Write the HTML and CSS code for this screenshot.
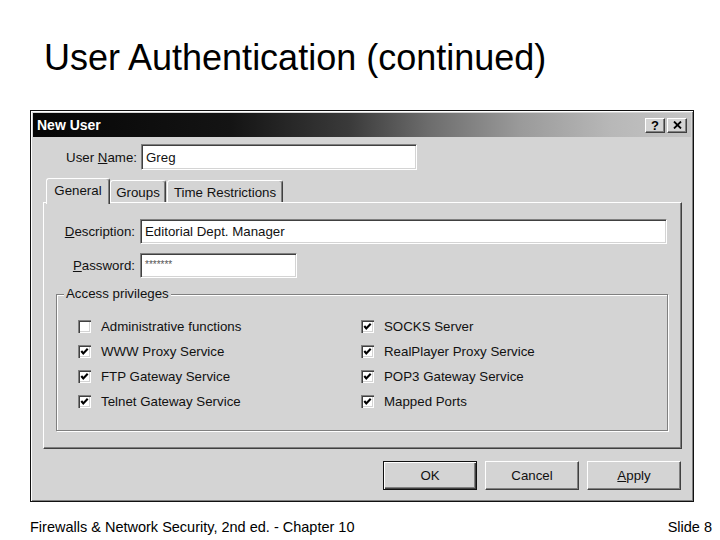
FILE: index.html
```html
<!DOCTYPE html>
<html>
<head>
<meta charset="utf-8">
<link rel="stylesheet" href="styles.css">
</head>
<body>
<div class="slide">
  <h1 class="title">User Authentication (continued)</h1>
  <div class="dialog">
    <div class="titlebar">
      <span class="caption">New User</span>
      <span class="tb-btns">
        <span class="tb-btn">?</span>
        <span class="tb-btn"><svg width="9" height="8" viewBox="0 0 9 8"><path d="M1 0.5 L8 7.5 M8 0.5 L1 7.5" stroke="#000" stroke-width="1.8" fill="none"/></svg></span>
      </span>
    </div>
    <div class="row user-row">
      <span class="lbl lbl-user">User <u>N</u>ame:</span>
      <span class="field field-user">Greg</span>
    </div>
    <div class="tabs">
      <span class="tab active">General</span>
      <span class="tab tab-groups">Groups</span>
      <span class="tab tab-time">Time Restrictions</span>
    </div>
    <div class="panel">
      <div class="row prow">
        <span class="lbl lbl-panel"><u>D</u>escription:</span>
        <span class="field field-desc">Editorial Dept. Manager</span>
      </div>
      <div class="row prow pw-row">
        <span class="lbl lbl-panel"><u>P</u>assword:</span>
        <span class="field field-pw">*******</span>
      </div>
      <div class="group">
        <div class="legend">Access privileges</div>
        <div class="checks">
          <div class="check"><span class="box"></span><span>Administrative functions</span></div>
          <div class="check"><span class="box"><svg width="13" height="13" viewBox="0 0 13 13"><path d="M3.3 6 L5.3 8.4 L9.7 3.8" stroke="#000" stroke-width="2.1" fill="none"/></svg></span><span>SOCKS Server</span></div>
          <div class="check"><span class="box"><svg width="13" height="13" viewBox="0 0 13 13"><path d="M3.3 6 L5.3 8.4 L9.7 3.8" stroke="#000" stroke-width="2.1" fill="none"/></svg></span><span>WWW Proxy Service</span></div>
          <div class="check"><span class="box"><svg width="13" height="13" viewBox="0 0 13 13"><path d="M3.3 6 L5.3 8.4 L9.7 3.8" stroke="#000" stroke-width="2.1" fill="none"/></svg></span><span>RealPlayer Proxy Service</span></div>
          <div class="check"><span class="box"><svg width="13" height="13" viewBox="0 0 13 13"><path d="M3.3 6 L5.3 8.4 L9.7 3.8" stroke="#000" stroke-width="2.1" fill="none"/></svg></span><span>FTP Gateway Service</span></div>
          <div class="check"><span class="box"><svg width="13" height="13" viewBox="0 0 13 13"><path d="M3.3 6 L5.3 8.4 L9.7 3.8" stroke="#000" stroke-width="2.1" fill="none"/></svg></span><span>POP3 Gateway Service</span></div>
          <div class="check"><span class="box"><svg width="13" height="13" viewBox="0 0 13 13"><path d="M3.3 6 L5.3 8.4 L9.7 3.8" stroke="#000" stroke-width="2.1" fill="none"/></svg></span><span>Telnet Gateway Service</span></div>
          <div class="check"><span class="box"><svg width="13" height="13" viewBox="0 0 13 13"><path d="M3.3 6 L5.3 8.4 L9.7 3.8" stroke="#000" stroke-width="2.1" fill="none"/></svg></span><span>Mapped Ports</span></div>
        </div>
      </div>
    </div>
    <div class="buttons">
      <span class="btn default">OK</span>
      <span class="btn">Cancel</span>
      <span class="btn"><span><u>A</u>pply</span></span>
    </div>
  </div>
  <div class="footer">
    <span>Firewalls &amp; Network Security, 2nd ed. - Chapter 10</span>
    <span>Slide 8</span>
  </div>
</div>
</body>
</html>
```
FILE: styles.css
```css
* { box-sizing: border-box; }
body {
  margin: 0;
  background: #fff;
  font-family: "Liberation Sans", Arial, sans-serif;
}
.slide {
  width: 720px;
  height: 540px;
  display: flex;
  flex-direction: column;
  overflow: hidden;
}
.title {
  margin: 0;
  padding: 38px 0 0 44px;
  font-size: 36px;
  line-height: 40px;
  font-weight: normal;
  color: #000;
}
.dialog {
  margin: 32px 0 0 30px;
  width: 664px;
  height: 392px;
  flex: none;
  border: 1px solid #111;
  padding: 2px;
  background: #d4d4d4;
  box-shadow: inset 1px 1px #fff, inset -1px -1px #808080;
  display: flex;
  flex-direction: column;
  font-size: 13.3px;
  color: #111;
}
.titlebar {
  height: 24px;
  flex: none;
  background: linear-gradient(to right, #050505 0%, #141414 30%, #3a3a3a 48%, #6c6c6c 60%, #9a9a9a 74%, #b8b8b8 88%, #c4c4c4 100%);
  display: flex;
  align-items: center;
  justify-content: space-between;
  padding: 0 4px 0 4px;
}
.caption {
  color: #fff;
  font-weight: bold;
  font-size: 14px;
}
.tb-btns { display: flex; gap: 2px; }
.tb-btn {
  width: 20px;
  height: 15px;
  background: #d4d4d4;
  border: 1px solid;
  border-color: #fff #404040 #404040 #fff;
  box-shadow: inset -1px -1px #808080;
  display: flex;
  align-items: center;
  justify-content: center;
  font-weight: bold;
  font-size: 13px;
  color: #000;
  line-height: 1;
}
.row {
  display: flex;
  align-items: center;
  gap: 4px;
  flex: none;
}
.user-row { margin-top: 7px; height: 26px; }
.lbl { text-align: right; }
.lbl-user { width: 104px; }
.field {
  background: #fff;
  height: 26px;
  display: flex;
  align-items: center;
  padding-left: 4px;
  border: 1px solid;
  border-color: #808080 #fff #fff #808080;
  box-shadow: inset 1px 1px #404040, inset -1px -1px #d4d4d4;
}
.field-user { width: 276px; }
.tabs {
  margin: 8px 0 0 13px;
  height: 24px;
  flex: none;
  display: flex;
  align-items: flex-end;
}
.tab {
  height: 22px;
  display: flex;
  align-items: center;
  justify-content: center;
  border: 1px solid;
  border-bottom: none;
  border-color: #fff #404040 transparent #fff;
  box-shadow: inset -1px 0 #808080;
  border-radius: 3px 3px 0 0;
  background: #d4d4d4;
  padding-top: 1px;
}
.tab.active {
  width: 64px;
  height: 26px;
  margin-bottom: -2px;
  padding-bottom: 3px;
  position: relative;
  z-index: 1;
}
.tab-groups { width: 56px; }
.tab-time { width: 116px; margin-left: 1px; }
.panel {
  margin: 0 9px 0 10px;
  height: 247px;
  flex: none;
  border: 1px solid;
  border-color: #fff #404040 #404040 #fff;
  box-shadow: inset -1px -1px #808080;
  padding-top: 16px;
}
.prow { gap: 5px; height: 25px; }
.lbl-panel { width: 91px; }
.field-desc { width: 527px; height: 25px; }
.field-pw {
  width: 157px;
  height: 25px;
  font-size: 10px;
  color: #555;
  align-items: flex-start;
  padding-top: 5px;
}
.pw-row { margin-top: 9px; }
.group {
  margin: 16px 0 0 12px;
  width: 612px;
  height: 137px;
  border: 1px solid #808080;
  box-shadow: inset 1px 1px #fff, 1px 1px #fff;
}
.legend {
  width: fit-content;
  margin: -9px 0 0 7px;
  padding: 0 2px;
  height: 16px;
  line-height: 16px;
  background: #d4d4d4;
}
.checks {
  display: grid;
  grid-template-columns: 283px 1fr;
  grid-auto-rows: 25px;
  margin: 12px 0 0 21px;
}
.check {
  display: flex;
  align-items: center;
  gap: 10px;
}
.box {
  width: 13px;
  height: 13px;
  flex: none;
  background: #fff;
  box-shadow: inset 1px 1px #808080, inset 2px 2px #404040, inset -1px -1px #fff, inset -2px -2px #d4d4d4;
  display: flex;
}
.buttons {
  display: flex;
  justify-content: flex-end;
  gap: 8px;
  margin: 12px 10px 0 0;
  flex: none;
}
.btn {
  width: 94px;
  height: 29px;
  border: 1px solid;
  border-color: #fff #404040 #404040 #fff;
  box-shadow: inset -1px -1px #808080;
  display: flex;
  align-items: center;
  justify-content: center;
}
.btn.default {
  border: 1px solid #111;
  box-shadow: inset 1px 1px #fff, inset -1px -1px #404040, inset -2px -2px #808080;
}
.footer {
  margin-top: 17px;
  display: flex;
  justify-content: space-between;
  padding: 0 8px 0 30px;
  font-size: 14.5px;
  line-height: 17px;
  color: #000;
}
```
